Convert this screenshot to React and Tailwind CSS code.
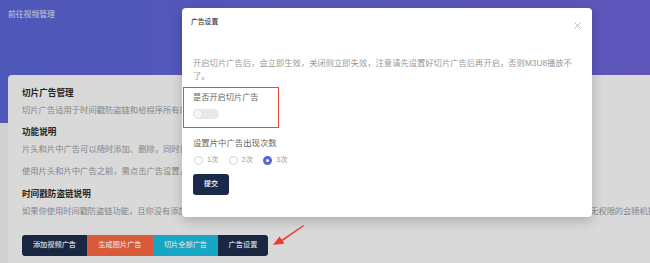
export default function App() {
  const font = { fontFamily: '"Liberation Sans", "Noto Sans CJK SC", sans-serif' };
  const radios = [
    { label: '1次', checked: false },
    { label: '2次', checked: false },
    { label: '3次', checked: true },
  ];

  return (
    <div className="relative w-[650px] h-[263px] overflow-hidden bg-[#f5f6f8]" style={font}>
      {/* page */}
      <div className="w-[1000px]">
        <div className="h-[123px] bg-gradient-to-r from-[#5c68da] to-[#7a62dc] px-2 pt-[9px]">
          <div className="text-[7.8px] leading-[11px] text-white/85">前往视频管理</div>
        </div>
        <div className="-mt-[48px] ml-2 h-[300px] rounded-[4px] bg-white pl-[14px] pt-[11px]">
          <h3 className="text-[8.6px] leading-[14px] font-bold text-[#2b2b2b]">切片广告管理</h3>
          <p className="mt-[3px] text-[8.3px] leading-[14px] text-[#9c9c9c]">
            切片广告适用于时间戳防盗链和给程序所有的视频进行统一的片头片中广告插入。
          </p>
          <h3 className="mt-[8px] text-[8.6px] leading-[14px] font-bold text-[#2b2b2b]">功能说明</h3>
          <p className="mt-[3px] text-[8.3px] leading-[14px] text-[#9c9c9c]">
            片头和片中广告可以随时添加、删除，同时设置后立即生效。
          </p>
          <p className="mt-[8px] text-[8.3px] leading-[14px] text-[#9c9c9c]">
            使用片头和片中广告之前，需点击广告设置，开启切片广告。
          </p>
          <h3 className="mt-[9px] text-[8.6px] leading-[14px] font-bold text-[#2b2b2b]">时间戳防盗链说明</h3>
          <p className="mt-[4px] text-[8.24px] leading-[14px] text-[#9c9c9c] whitespace-nowrap">
            如果你使用时间戳防盗链功能，且你没有添加本站的播放域名到白名单中，那么所有的访问都会被视为非法请求，播放器在检测到后对于这些请求进行拦截，无权限的会随机播放片中广告。
          </p>
          <div className="mt-[16px] flex w-max overflow-hidden rounded-[3px] text-[7.2px] font-medium text-white">
            <button className="h-[21px] w-[65px] bg-[#1e2e4f]">添加视频广告</button>
            <button className="h-[21px] w-[66px] bg-[#ff6a45]">生成图片广告</button>
            <button className="h-[21px] w-[65px] bg-[#1cc4e6]">切片全部广告</button>
            <button className="h-[21px] w-[50px] bg-[#1e2e4f]">广告设置</button>
          </div>
        </div>
      </div>

      {/* mask */}
      <div className="absolute inset-0 bg-black/15" />

      {/* modal */}
      <div className="absolute left-[182px] top-[8px] w-[410px] h-[209px] rounded-[4px] bg-white shadow-[0_4px_12px_rgba(0,0,0,0.2)]">
        <div className="flex items-start justify-between pl-[9px] pr-[11px] pt-[9px]">
          <span className="text-[6.8px] leading-[10px] font-medium text-[#333]">广告设置</span>
          <svg width="7" height="7" viewBox="0 0 10 10" className="mt-[5px]">
            <path d="M1 1L9 9M9 1L1 9" stroke="#a8a8a8" strokeWidth="1.2" />
          </svg>
        </div>
        <div className="pl-[11px] pr-[20px] pt-[28px]">
          <p className="text-[8.3px] leading-[12.5px] text-[#999]">
            开启切片广告后，会立即生效，关闭则立即失效，注意请先设置好切片广告后再开启，否则M3U8播放不了。
          </p>
          <div className="-ml-[10px] mt-[5px] w-[96px] border-[1.5px] border-[#e8473f] pl-[9px] pt-[5px] pb-[8px]">
            <div className="text-[8.2px] leading-[10px] text-[#666]">是否开启切片广告</div>
            <div className="mt-[6px] flex h-[10px] w-[26px] items-center rounded-full bg-[#e6e8ec] px-[1px]">
              <div className="h-[8px] w-[8px] rounded-full bg-[#f5f6f8] shadow-[0_0_1px_rgba(0,0,0,0.25)]" />
            </div>
          </div>
          <div className="mt-[10px] text-[8.4px] leading-[10px] text-[#666]">设置片中广告出现次数</div>
          <div className="mt-[7px] flex h-[10px] items-center">
            {radios.map(r => (
              <label key={r.label} className="mr-[9px] flex items-center">
                <span
                  className={`ml-[1px] box-border h-[9px] w-[9px] rounded-full bg-white ${
                    r.checked ? 'border-[3px] border-[#5166e0]' : 'border border-[#d4d4d4]'
                  }`}
                />
                <span className="ml-[4px] text-[7.4px] text-[#999]">{r.label}</span>
              </label>
            ))}
          </div>
          <button className="mt-[9px] h-[21px] w-[36px] rounded-[3px] bg-[#1b2a4a] text-[7px] font-medium text-white">
            提交
          </button>
        </div>
      </div>

      {/* annotation arrow */}
      <svg className="absolute left-[268px] top-[220px]" width="42" height="30" viewBox="0 0 42 30">
        <path d="M36 6 L14 21.5 L13 20 L35.3 5 Z" fill="#f23b2f" />
        <path d="M5 25 L11.5 16.5 L16.5 23.5 Z" fill="#f23b2f" />
      </svg>
    </div>
  );
}
